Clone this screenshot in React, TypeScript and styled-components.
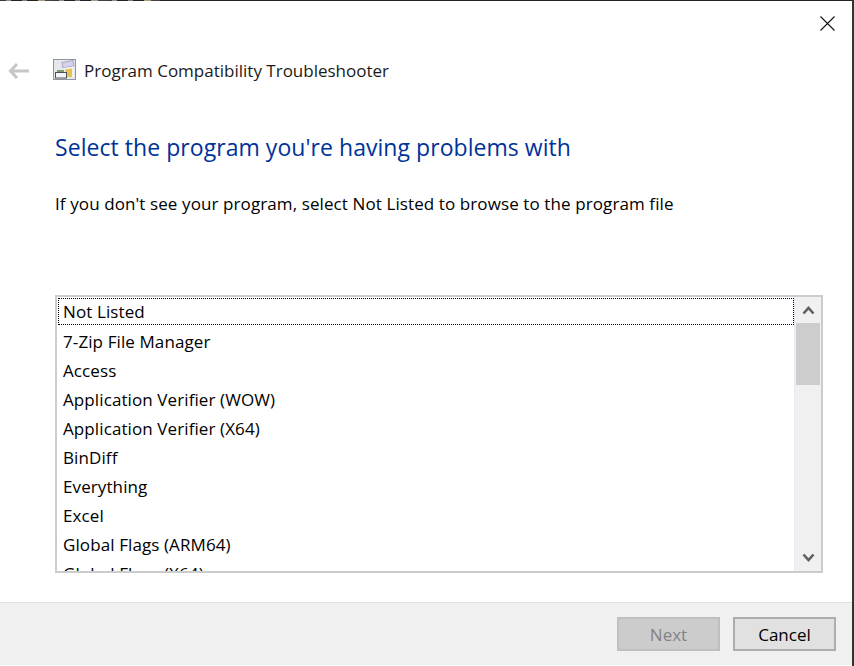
import styled, { createGlobalStyle } from 'styled-components';

const programs = [
  'Not Listed',
  '7-Zip File Manager',
  'Access',
  'Application Verifier (WOW)',
  'Application Verifier (X64)',
  'BinDiff',
  'Everything',
  'Excel',
  'Global Flags (ARM64)',
  'Global Flags (X64)',
];

const GlobalStyle = createGlobalStyle`
  html, body {
    margin: 0;
    padding: 0;
    background: #fff;
  }
  body {
    font-family: "Open Sans", "Noto Sans", "Liberation Sans", sans-serif;
  }
`;

const Dialog = styled.div`
  width: 854px;
  height: 666px;
  box-sizing: border-box;
  border-right: 2px solid #333;
  background: #fff;
  display: flex;
  flex-direction: column;
  overflow: hidden;
`;

// what is left of the desktop behind the window, along the top edge
const TopEdge = styled.div`
  height: 1px;
  flex: none;
  background:
    repeating-linear-gradient(
        90deg,
        #3a3a3a 0 6px,
        #8d8d85 6px 11px,
        #222 11px 22px,
        #6f8190 22px 27px,
        #222 27px 38px,
        #a89a80 38px 45px,
        #444 45px 53px
      )
      0 0 / 160px 1px no-repeat,
    #222;
`;

const CloseRow = styled.div`
  height: 46px;
  display: flex;
  justify-content: flex-end;
  align-items: flex-start;
  padding: 15px 17px 0 0;
  box-sizing: border-box;
`;

const CloseIcon = styled.svg`
  width: 15px;
  height: 15px;
  display: block;
`;

const TitleRow = styled.div`
  height: 47px;
  display: flex;
  align-items: center;
  padding-left: 8px;
`;

const BackArrow = styled.svg`
  width: 22px;
  height: 16px;
  margin-right: 23px;
`;

const AppIcon = styled.svg`
  width: 24px;
  height: 22px;
  margin-right: 7px;
  margin-top: -2px;
`;

const TitleText = styled.span`
  font-size: 17px;
  color: #1a1a1a;
`;

const Content = styled.div`
  flex: 1;
  padding: 0 29px 0 55px;
  display: flex;
  flex-direction: column;
`;

const Heading = styled.h1`
  margin: 37px 0 0;
  font-size: 23px;
  line-height: 32px;
  font-weight: 400;
  letter-spacing: 0.05px;
  color: #003399;
`;

const Hint = styled.p`
  margin: 29px 0 0;
  font-size: 17px;
  line-height: 24px;
  letter-spacing: 0.1px;
  color: #000;
`;

const ListBox = styled.div`
  margin-top: 79px;
  width: 768px;
  height: 278px;
  box-sizing: border-box;
  border: 2px solid #cccccc;
  display: flex;
  overflow: hidden;
`;

const Rows = styled.ul`
  flex: 1;
  margin: 0;
  padding: 1px 0 0 1px;
  list-style: none;
  overflow: hidden;
`;

const Row = styled.li<{ $focused?: boolean }>`
  height: ${(p) => (p.$focused ? '27px' : '29px')};
  margin-bottom: ${(p) => (p.$focused ? '2px' : '0')};
  box-sizing: border-box;
  padding-left: ${(p) => (p.$focused ? '4px' : '5px')};
  font-size: 17px;
  letter-spacing: 0.1px;
  line-height: ${(p) => (p.$focused ? '25px' : '29px')};
  color: #000;
  border: ${(p) => (p.$focused ? '1px dotted #000' : 'none')};
`;

const ScrollBar = styled.div`
  width: 27px;
  flex: none;
  background: #f0f0f0;
  border-left: 1px solid #e3ebf7;
  padding: 0 1px;
  box-sizing: border-box;
  display: flex;
  flex-direction: column;
`;

const ScrollButton = styled.div`
  height: 26px;
  flex: none;
  display: flex;
  align-items: center;
  justify-content: center;
`;

const ScrollThumb = styled.div`
  height: 62px;
  background: #cdcdcd;
`;

const ScrollTrack = styled.div`
  flex: 1;
`;

const Footer = styled.div`
  height: 63px;
  background: #f0f0f0;
  border-top: 1px solid #dfdfdf;
  box-sizing: border-box;
  display: flex;
  justify-content: flex-end;
  gap: 13px;
  padding: 14px 16px 0 0;
  margin-bottom: 1px;
`;

const Button = styled.button<{ disabled?: boolean }>`
  width: 103px;
  height: 34px;
  box-sizing: border-box;
  font-family: inherit;
  font-size: 17px;
  padding: 0;
  background: ${(p) => (p.disabled ? '#cccccc' : '#e1e1e1')};
  border: 2px solid ${(p) => (p.disabled ? '#bfbfbf' : '#adadad')};
  color: ${(p) => (p.disabled ? '#838383' : '#000')};
`;

const Chevron = ({ up }: { up?: boolean }) => (
  <svg width="13" height="10" viewBox="0 0 13 10">
    <polyline
      points={up ? '1.5,8.5 6.5,3 11.5,8.5' : '1.5,1.5 6.5,7 11.5,1.5'}
      fill="none"
      stroke="#606060"
      strokeWidth="2.6"
    />
  </svg>
);

export default function App() {
  return (
    <>
      <GlobalStyle />
      <Dialog>
        <TopEdge />
        <CloseRow>
          <CloseIcon viewBox="0 0 15 15">
            <path d="M0.5 0.5 L14.5 14.5 M14.5 0.5 L0.5 14.5" stroke="#111" strokeWidth="1.1" fill="none" />
          </CloseIcon>
        </CloseRow>
        <TitleRow>
          <BackArrow viewBox="0 0 22 16">
            <path d="M9 1 L2.5 8 L9 15 M3 8 H21" stroke="#c6c6c6" strokeWidth="3" fill="none" />
          </BackArrow>
          <AppIcon viewBox="0 0 24 22">
            <rect x="0.5" y="0.5" width="22" height="20" fill="#e4e7ec" stroke="#8e949c" />
            <path d="M9 3.5 L20 1.5 L21 7 L10 9 Z" fill="#d4d2ec" stroke="#8f8db0" strokeWidth="0.7" />
            <path d="M10 9 L21 7.5 L21 18 L12 18 Z" fill="#f0f0f0" />
            <path d="M12 10.5 L19 9.5 L19 18 L14 18 Z" fill="#e8c24e" />
            <rect x="4" y="11" width="7" height="2.5" fill="#7f9a6a" />
            <rect x="2.5" y="13.5" width="11" height="5.5" fill="#f6f6f6" stroke="#4c5056" />
          </AppIcon>
          <TitleText>Program Compatibility Troubleshooter</TitleText>
        </TitleRow>
        <Content>
          <Heading>Select the program you're having problems with</Heading>
          <Hint>If you don't see your program, select Not Listed to browse to the program file</Hint>
          <ListBox>
            <Rows>
              {programs.map((name, i) => (
                <Row key={name} $focused={i === 0}>
                  {name}
                </Row>
              ))}
            </Rows>
            <ScrollBar>
              <ScrollButton>
                <Chevron up />
              </ScrollButton>
              <ScrollThumb />
              <ScrollTrack />
              <ScrollButton>
                <Chevron />
              </ScrollButton>
            </ScrollBar>
          </ListBox>
        </Content>
        <Footer>
          <Button disabled>Next</Button>
          <Button>Cancel</Button>
        </Footer>
      </Dialog>
    </>
  );
}
